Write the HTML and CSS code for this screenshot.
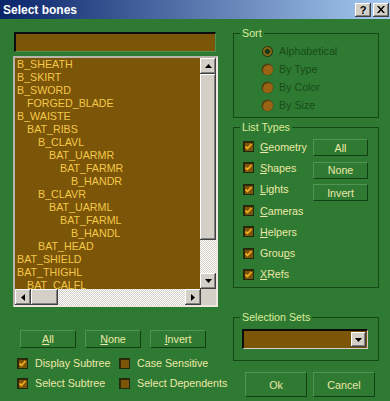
FILE: index.html
```html
<!DOCTYPE html>
<html lang="en">
<head>
  <meta charset="UTF-8" />
  <title>Select bones</title>
  <link rel="stylesheet" href="styles.css">
</head>
<body>
  <div class="window">
    <div class="titlebar">
      <span class="title">Select bones</span>
      <div class="title-btns">
        <span class="tbtn">?</span>
        <span class="tbtn">
          <svg width="8" height="7" viewBox="0 0 8 7"><path d="M0 0h2l2 2.5L6 0h2L5 3.5 8 7H6L4 4.5 2 7H0l3-3.5z" fill="#000"/></svg>
        </span>
      </div>
    </div>

    <div class="client">
      <div class="left">
        <div class="search"></div>

        <div class="listbox">
          <div class="list-main">
            <ul class="items">
              <li>B_SHEATH</li>
              <li>B_SKIRT</li>
              <li>B_SWORD</li>
              <li class="lv1">FORGED_BLADE</li>
              <li>B_WAISTE</li>
              <li class="lv1">BAT_RIBS</li>
              <li class="lv2">B_CLAVL</li>
              <li class="lv3">BAT_UARMR</li>
              <li class="lv4">BAT_FARMR</li>
              <li class="lv5">B_HANDR</li>
              <li class="lv2">B_CLAVR</li>
              <li class="lv3">BAT_UARML</li>
              <li class="lv4">BAT_FARML</li>
              <li class="lv5">B_HANDL</li>
              <li class="lv2">BAT_HEAD</li>
              <li>BAT_SHIELD</li>
              <li>BAT_THIGHL</li>
              <li class="lv1">BAT_CALFL</li>
            </ul>
            <div class="vscroll">
              <div class="sbtn"><svg width="7" height="4" viewBox="0 0 7 4"><path d="M3.5 0L7 4H0z"/></svg></div>
              <div class="thumb"></div>
              <div class="track"></div>
              <div class="sbtn"><svg width="7" height="4" viewBox="0 0 7 4"><path d="M0 0h7L3.5 4z"/></svg></div>
            </div>
          </div>
          <div class="hscroll">
            <div class="sbtn"><svg width="4" height="7" viewBox="0 0 4 7"><path d="M0 3.5L4 0v7z"/></svg></div>
            <div class="thumb"></div>
            <div class="track"></div>
            <div class="sbtn"><svg width="4" height="7" viewBox="0 0 4 7"><path d="M0 0l4 3.5L0 7z"/></svg></div>
            <div class="corner"></div>
          </div>
        </div>

        <div class="btn-row">
          <button class="gbtn"><u>A</u>ll</button>
          <button class="gbtn"><u>N</u>one</button>
          <button class="gbtn"><u>I</u>nvert</button>
        </div>

        <div class="opts">
          <label class="check"><span class="cb on"></span>Display Subtree</label>
          <label class="check"><span class="cb"></span>Case Sensitive</label>
          <label class="check"><span class="cb on"></span>Select Subtree</label>
          <label class="check"><span class="cb"></span>Select Dependents</label>
        </div>
      </div>

      <div class="right">
        <div class="group sort">
          <span class="legend">Sort</span>
          <div class="ropt"><span class="rb on"></span>Alphabetical</div>
          <div class="ropt"><span class="rb"></span>By Type</div>
          <div class="ropt"><span class="rb"></span>By Color</div>
          <div class="ropt"><span class="rb"></span>By Size</div>
        </div>

        <div class="group types">
          <span class="legend">List Types</span>
          <div class="type-list">
            <label class="check"><span class="cb on"></span><span><u>G</u>eometry</span></label>
            <label class="check"><span class="cb on"></span><span><u>S</u>hapes</span></label>
            <label class="check"><span class="cb on"></span><span><u>L</u>ights</span></label>
            <label class="check"><span class="cb on"></span><span><u>C</u>ameras</span></label>
            <label class="check"><span class="cb on"></span><span><u>H</u>elpers</span></label>
            <label class="check"><span class="cb on"></span><span>Grou<u>p</u>s</span></label>
            <label class="check"><span class="cb on"></span><span><u>X</u>Refs</span></label>
          </div>
          <div class="type-btns">
            <button class="gbtn">All</button>
            <button class="gbtn">None</button>
            <button class="gbtn">Invert</button>
          </div>
        </div>

        <div class="group sets">
          <span class="legend">Selection Sets</span>
          <div class="combo">
            <span class="sbtn small"><svg width="7" height="4" viewBox="0 0 7 4"><path d="M0 0h7L3.5 4z"/></svg></span>
          </div>
        </div>

        <div class="actions">
          <button class="gbtn big">Ok</button>
          <button class="gbtn big">Cancel</button>
        </div>
      </div>
    </div>
  </div>
</body>
</html>
```

FILE: styles.css
```css
* {
  box-sizing: border-box;
}

body {
  margin: 0;
  font-family: 'Liberation Sans', Arial, sans-serif;
  font-size: 10.7px;
}

.window {
  width: 390px;
  height: 401px;
  background: #2f7a33;
  display: flex;
  flex-direction: column;
  overflow: hidden;
}

/* title bar */
.titlebar {
  height: 19px;
  background: linear-gradient(to right, #0a246a, #a6caf0);
  display: flex;
  align-items: center;
  justify-content: space-between;
  padding: 0 1px 0 3px;
}

.title {
  color: #fff;
  font-weight: bold;
  font-size: 12px;
}

.title-btns {
  display: flex;
  gap: 2px;
}

.tbtn {
  width: 16px;
  height: 14px;
  background: #d4d0c8;
  box-shadow: inset -1px -1px #404040, inset 1px 1px #fff, inset -2px -2px #808080;
  display: flex;
  align-items: center;
  justify-content: center;
  font-weight: bold;
  font-size: 11px;
  color: #000;
}

/* layout */
.client {
  flex: 1;
  display: flex;
  gap: 15px;
  padding-left: 13px;
}

.left {
  width: 205px;
  padding-top: 13px;
  display: flex;
  flex-direction: column;
}

.right {
  width: 146px;
  padding-top: 14px;
  display: flex;
  flex-direction: column;
}

/* name field + list */
.search {
  height: 20px;
  margin: 0 2px 0 1px;
  background: #7b5508;
  border-top: 2px solid #0c0c0c;
  border-left: 2px solid #0c0c0c;
  border-bottom: 1px solid #4f8f52;
  border-right: 1px solid #4f8f52;
}

.listbox {
  margin-top: 4px;
  height: 251px;
  border: 2px solid;
  border-color: #b8b4ac #ebe7df #ebe7df #b8b4ac;
}

.list-main {
  display: flex;
  height: 231px;
}

.items {
  flex: 1;
  margin: 0;
  padding: 0 0 0 2px;
  list-style: none;
  background: #7b5508;
  color: #f4c848;
  line-height: 13px;
  white-space: nowrap;
  overflow: hidden;
}

.lv1 { padding-left: 10px; }
.lv2 { padding-left: 21px; }
.lv3 { padding-left: 32px; }
.lv4 { padding-left: 43px; }
.lv5 { padding-left: 54px; }

.vscroll {
  width: 16px;
  display: flex;
  flex-direction: column;
}

.sbtn {
  width: 16px;
  height: 16px;
  flex: none;
  background: #d4d0c8;
  box-shadow: inset -1px -1px #404040, inset 1px 1px #fff, inset -2px -2px #808080;
  display: flex;
  align-items: center;
  justify-content: center;
}

.sbtn svg {
  fill: #000;
}

.thumb {
  background: #d4d0c8;
  box-shadow: inset -1px -1px #404040, inset 1px 1px #fff, inset -2px -2px #808080;
}

.vscroll .thumb {
  height: 166px;
}

.track {
  flex: 1;
  background: repeating-conic-gradient(#fff 0 25%, #d4d0c8 0 50%) 0 0 / 2px 2px;
}

.hscroll {
  display: flex;
  height: 16px;
}

.hscroll .thumb {
  width: 27px;
}

.corner {
  width: 15px;
  background: #d4d0c8;
}

/* green buttons */
.gbtn {
  background: #2f7a33;
  color: #ece8a8;
  border: 1px solid;
  border-color: #4f9452 #123f14 #123f14 #4f9452;
  font: inherit;
  padding: 0;
  cursor: pointer;
}

.btn-row {
  display: flex;
  gap: 9px;
  margin-top: 23px;
  padding-left: 7px;
}

.btn-row .gbtn {
  width: 56px;
  height: 18px;
}

/* checkboxes */
.check {
  display: flex;
  align-items: center;
  gap: 7px;
  color: #ece8a8;
  white-space: nowrap;
}

.cb {
  width: 11px;
  height: 11px;
  flex: none;
  background: #7b5508;
  border: 1px solid #1e2a0e;
  box-shadow: inset 1px 1px #3a2804;
}

.cb.on {
  background: #7b5508 url("data:image/svg+xml,%3Csvg xmlns='http://www.w3.org/2000/svg' width='9' height='9'%3E%3Cpath d='M1.5 4.5l2 2 4-4.5' fill='none' stroke='%23f5aa24' stroke-width='1.8'/%3E%3C/svg%3E") center / 9px 9px no-repeat;
}

.opts {
  display: grid;
  grid-template-columns: 102px auto;
  grid-auto-rows: 20px;
  margin-top: 5px;
  padding-left: 4px;
}

/* group boxes */
.group {
  position: relative;
  border: 1px solid #154815;
}

.legend {
  position: absolute;
  top: -7px;
  left: 6px;
  padding: 0 2px;
  line-height: 13px;
  background: #2f7a33;
  color: #dcec9c;
}

.sort {
  height: 85px;
  padding: 8px 0 0 28px;
}

.ropt {
  height: 18px;
  display: flex;
  align-items: center;
  gap: 6px;
  color: #184c18;
}

.rb {
  width: 11px;
  height: 11px;
  border-radius: 50%;
  background: #9a6414;
  box-shadow: inset 1px 1px #4a3a10, 0 0 0 0.5px #3e4a18;
}

.rb.on {
  background: radial-gradient(circle, #153418 0 2px, #6a5a14 2.5px 3px, #8c6a14 3.5px);
  box-shadow: inset 0 0 0 1px #1e3a1a;
}

.types {
  margin-top: 9px;
  height: 161px;
  display: flex;
  justify-content: space-between;
  padding: 8px 10px 0 9px;
}

.type-list .check {
  height: 21.3px;
  gap: 6px;
}

.type-btns {
  display: flex;
  flex-direction: column;
  gap: 5.5px;
  padding-top: 3px;
}

.type-btns .gbtn {
  width: 55px;
  height: 17px;
}

.sets {
  margin-top: 29px;
  height: 44px;
  padding: 11px 0 0 8px;
}

.combo {
  width: 126px;
  height: 20px;
  background: #7b5508;
  border-top: 2px solid #0c0c0c;
  border-left: 2px solid #0c0c0c;
  border-bottom: 1px solid #d4d0c8;
  border-right: 1px solid #d4d0c8;
  display: flex;
  justify-content: flex-end;
  align-items: center;
  padding-right: 1px;
}

.sbtn.small {
  width: 15px;
  height: 15px;
}

.actions {
  display: flex;
  gap: 6px;
  margin-top: 11px;
  padding-left: 12px;
}

.gbtn.big {
  width: 62px;
  height: 25px;
}
```
